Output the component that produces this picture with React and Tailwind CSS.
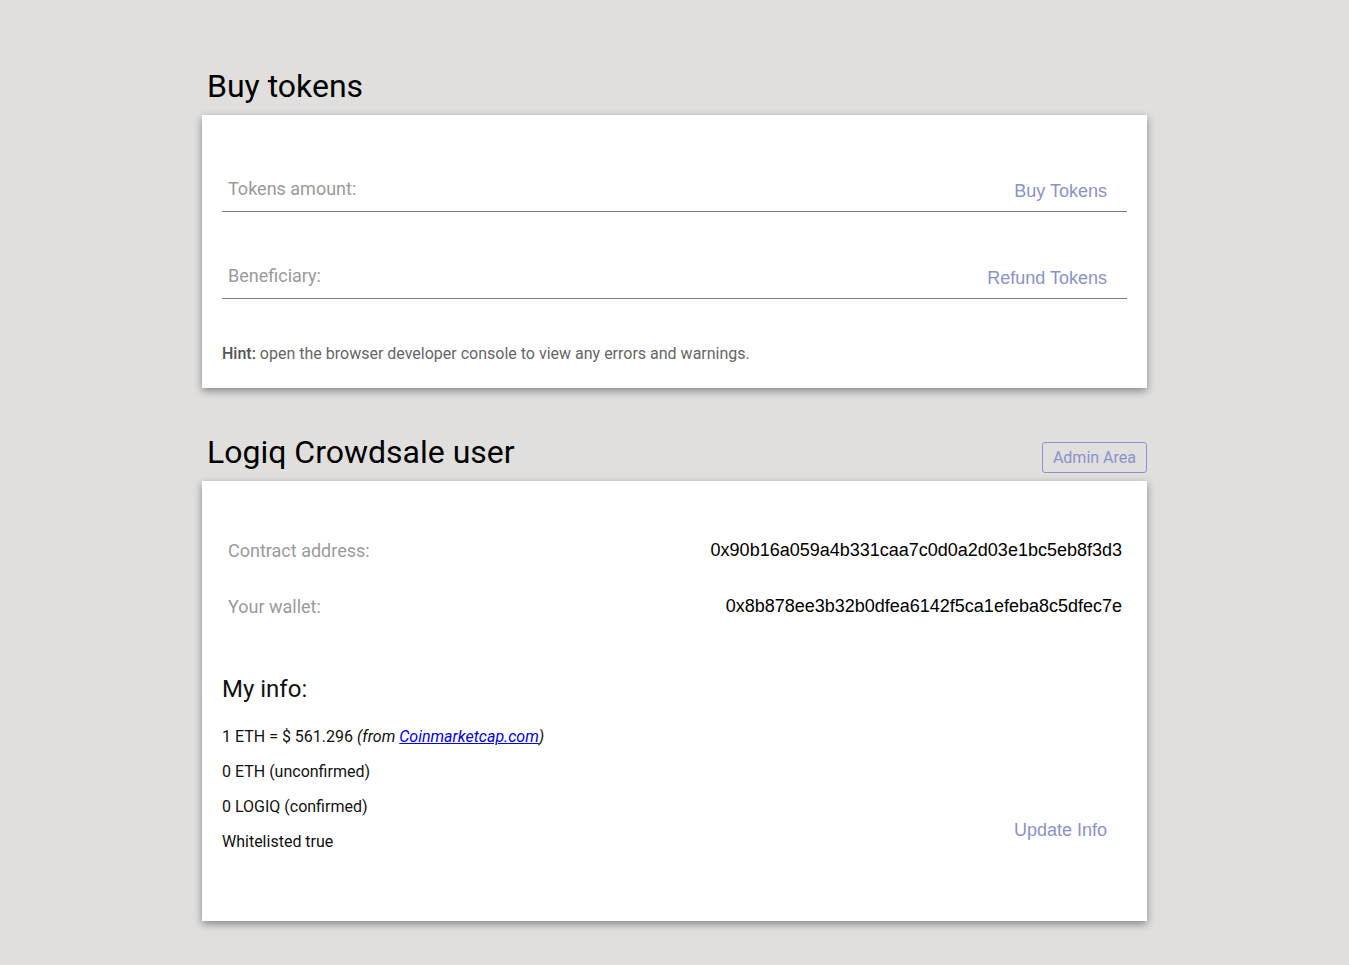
import React from "react";

const roboto = { fontFamily: "Roboto, 'Liberation Sans', sans-serif" };

const InputRow = ({ label, action, className }) => (
  <div className={`flex items-end justify-between border-b border-[#7b7b7b] ${className}`}>
    <span className="pl-[6px] pb-[12px] text-[18px] leading-[20px] text-[#9a9a9a]">{label}</span>
    <button className="pr-5 pb-[10px] text-[18px] leading-[20px] text-[#8a92cc] font-['Liberation_Sans',Arial,sans-serif]">
      {action}
    </button>
  </div>
);

const InfoRow = ({ label, value }) => (
  <div className="flex items-center justify-between h-[56px] pl-[6px]">
    <span className="text-[18px] text-[#9a9a9a]">{label}</span>
    <span className="text-[18px] text-black font-['Liberation_Sans',Arial,sans-serif]">{value}</span>
  </div>
);

export default function App() {
  return (
    <div className="min-h-screen bg-[#e0dfdd] pt-[66px] pb-10" style={roboto}>
      <div className="w-[945px] mx-auto">
        {/* buy tokens */}
        <div className="pl-[5px] mb-[9px]">
          <h2 className="text-[32px] leading-[40px] text-black">Buy tokens</h2>
        </div>
        <div className="bg-white shadow-[0_3px_8px_rgba(0,0,0,0.4)] px-5 pt-5 pb-[24px]">
          <InputRow label="Tokens amount:" action="Buy Tokens" className="h-[77px]" />
          <InputRow label="Beneficiary:" action="Refund Tokens" className="h-[87px]" />
          <p className="mt-[45px] text-[16px] leading-[20px] text-[#666]">
            <b className="font-medium text-[#555]">Hint:</b> open the browser developer console to view any errors and warnings.
          </p>
        </div>

        {/* user */}
        <div className="mt-[44px] mb-[9px] flex items-end justify-between pl-[5px]">
          <h2 className="text-[32px] leading-[40px] text-black">Logiq Crowdsale user</h2>
          <button className="h-[31px] px-[10px] translate-y-px border border-[#8a92cc] rounded-[3px] text-[16px] text-[#8a92cc]">
            Admin Area
          </button>
        </div>
        <div className="bg-white shadow-[0_3px_8px_rgba(0,0,0,0.4)] px-5 pt-5 pb-[69px]">
          <div className="mt-[21px] pr-[5px]">
            <InfoRow label="Contract address:" value="0x90b16a059a4b331caa7c0d0a2d03e1bc5eb8f3d3" />
            <InfoRow label="Your wallet:" value="0x8b878ee3b32b0dfea6142f5ca1efeba8c5dfec7e" />
          </div>
          <h3 className="mt-[39px] text-[24px] leading-[32px] text-[#111]">My info:</h3>
          <div className="mt-[22px] flex items-end justify-between">
            <div className="flex flex-col gap-[15px] text-[16px] leading-[20px] text-[#111]">
              <div>
                1 ETH = $ 561.296{" "}
                <i>
                  (from <a href="#" className="text-[#0000ee] underline">Coinmarketcap.com</a>)
                </i>
              </div>
              <div>0 ETH (unconfirmed)</div>
              <div>0 LOGIQ (confirmed)</div>
              <div>Whitelisted true</div>
            </div>
            <button className="pr-5 pb-[11px] text-[18px] leading-[22px] text-[#8a92cc] font-['Liberation_Sans',Arial,sans-serif]">
              Update Info
            </button>
          </div>
        </div>
      </div>
    </div>
  );
}
